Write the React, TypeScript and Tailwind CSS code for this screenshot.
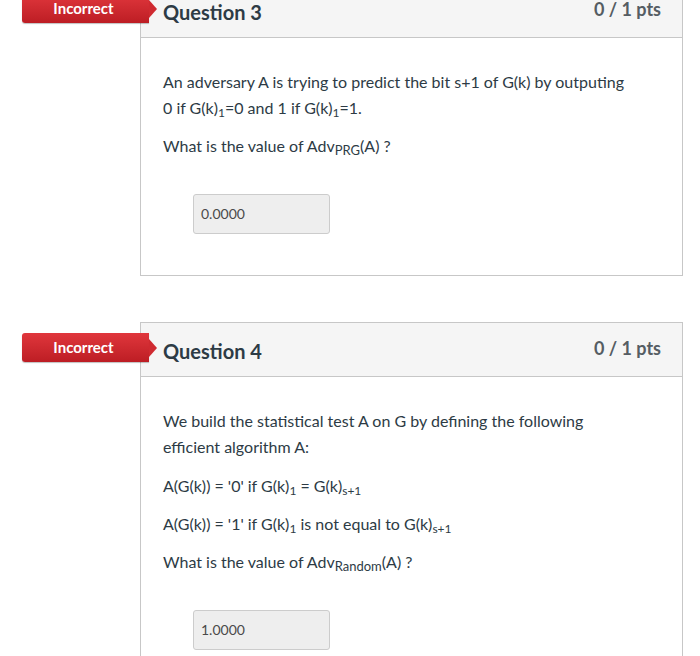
import React from "react";

function Badge() {
  return (
    <div className="absolute left-[-119px] top-[10px] flex items-center">
      <div className="w-[127px] h-[29px] rounded-l-[3px] bg-gradient-to-b from-[#e0363c] to-[#bd1d24] shadow-[0_1px_1px_rgba(0,0,0,0.25)] flex items-center justify-center pr-[4px]">
        <span className="text-white text-[15px] font-bold leading-none">Incorrect</span>
      </div>
      <div className="w-0 h-0 border-y-[9px] border-y-transparent border-l-[8px] border-l-[#cf2a30]" />
    </div>
  );
}

function Header({ title }: { title: string }) {
  return (
    <div className="h-[54px] bg-[#f5f5f5] border-b border-[#c7c7c7] flex items-center justify-between pl-[22px] pr-[21px]">
      <span className="text-[20px] font-bold text-[#2d3b45] mt-[3px]">{title}</span>
      <span className="text-[18px] font-bold text-[#555d63] -mt-[2px]">0 / 1 pts</span>
    </div>
  );
}

function Answer({ value }: { value: string }) {
  return (
    <div className="ml-[30px] w-[137px] h-[40px] bg-[#eeeeee] border border-[#cccccc] rounded-[3px] flex items-center pl-[7px] text-[14px] text-[#4a4a4a]">
      {value}
    </div>
  );
}

export default function App() {
  return (
    <div className="w-[700px] h-[656px] overflow-hidden bg-white font-['Lato','Liberation_Sans',sans-serif] text-[#2d3b45]">
      <div className="ml-[140px] w-[543px] -mt-[17px] flex flex-col gap-[46px]">
        <div className="relative border border-[#c7c7c7]">
          <Badge />
          <Header title="Question 3" />
          <div className="pl-[22px] pr-[52px] pt-[31px] pb-[41px] text-[16px] leading-[26px]">
            <p>
              An adversary A is trying to predict the bit s+1 of G(k) by outputing 0 if G(k)<sub>1</sub>=0 and 1 if G(k)<sub>1</sub>=1.
            </p>
            <p className="mt-[12px]">
              What is the value of Adv<sub className="text-[13px]">PRG</sub>(A) ?
            </p>
            <div className="mt-[35px]">
              <Answer value="0.0000" />
            </div>
          </div>
        </div>

        <div className="relative border border-[#c7c7c7]">
          <Badge />
          <Header title="Question 4" />
          <div className="pl-[22px] pr-[52px] pt-[31px] pb-[41px] text-[16px] leading-[26px]">
            <p>
              We build the statistical test A on G by defining the following efficient algorithm A:
            </p>
            <p className="mt-[13px]">
              A(G(k)) = '0' if G(k)<sub>1</sub> = G(k)<sub>s+1</sub>
            </p>
            <p className="mt-[12px]">
              A(G(k)) = '1' if G(k)<sub>1</sub> is not equal to G(k)<sub>s+1</sub>
            </p>
            <p className="mt-[12px]">
              What is the value of Adv<sub className="text-[13px]">Random</sub>(A) ?
            </p>
            <div className="mt-[35px]">
              <Answer value="1.0000" />
            </div>
          </div>
        </div>
      </div>
    </div>
  );
}
